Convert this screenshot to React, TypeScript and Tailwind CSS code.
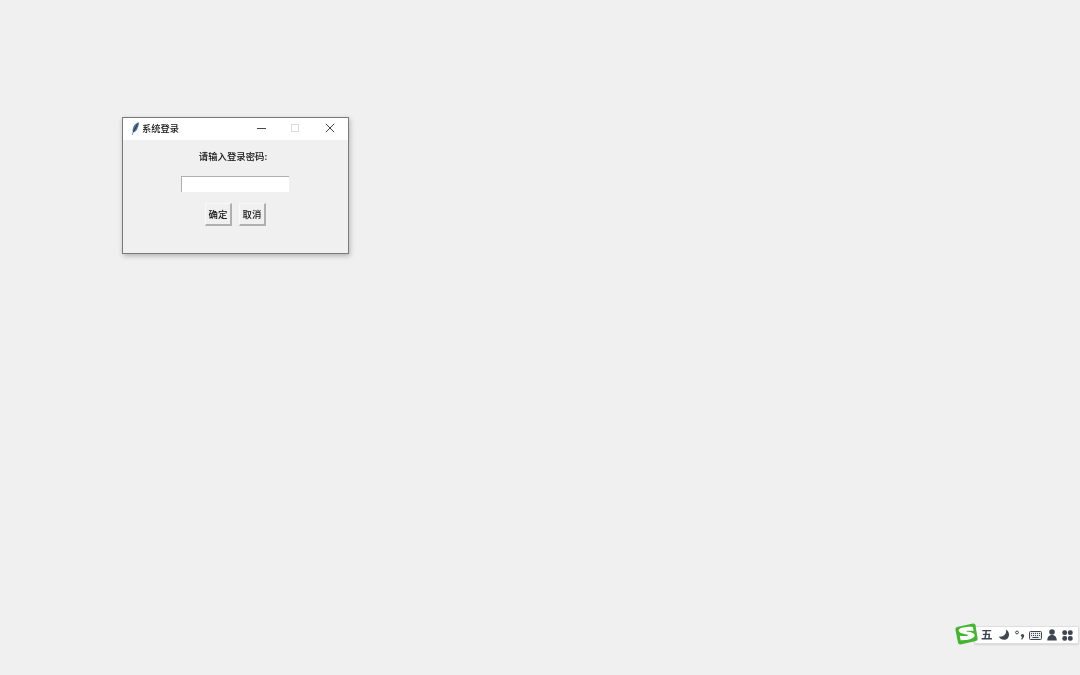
import React from "react";

const cjk = { fontFamily: '"Noto Sans CJK SC", sans-serif' };

function Feather() {
  return (
    <svg width="9" height="13" viewBox="0 0 9 13">
      <path d="M8 0.2 C5.2 0.6 2.8 2.8 1.9 6.3 C1.5 8.1 1.6 9.3 1.9 10 L0.8 12.7 L1.5 13 L2.6 10.3 C5.4 9.6 7.4 6.5 8 0.2 Z" fill="#4f749e" />
      <path d="M6.8 1.6 L2.4 9.9" stroke="#1d2f45" strokeWidth="0.9" fill="none" />
    </svg>
  );
}

function Btn({ label }: { label: string }) {
  return (
    <div className="w-[27px] h-[23px] flex items-center justify-center bg-[#f0f0f0] border-t border-l border-t-[#f8f8f8] border-l-[#f8f8f8] border-r-2 border-b-2 border-r-[#b0b0b0] border-b-[#b0b0b0]">
      <span className="mt-[1px] text-[9.4px] font-medium text-[#111] leading-none blur-[0.3px]">{label}</span>
    </div>
  );
}

const ic = "#3f4652";

export default function App() {
  return (
    <div className="relative w-[1080px] h-[675px] bg-[#f0f0f0] overflow-hidden" style={cjk}>
      {/* Window */}
      <div className="absolute left-[122px] top-[117px] w-[227px] h-[137px] flex flex-col border border-[#7a7a7a] bg-[#f0f0f0] shadow-[1px_2px_5px_rgba(0,0,0,0.25)]">
        <div className="h-[22px] bg-white flex items-center shrink-0 pb-[1px]">
          <div className="ml-[8px] w-[9px] flex items-center blur-[0.2px]"><Feather /></div>
          <span className="ml-[2px] mt-[1px] text-[9.25px] font-medium text-[#111] leading-none blur-[0.3px]">系统登录</span>
          <div className="ml-auto flex items-center mb-[2px]">
            <svg width="9" height="10" viewBox="0 0 9 10" className="mr-[25px]"><path d="M0 5.5H9" stroke="#444" strokeWidth="1" /></svg>
            <svg width="8" height="8" viewBox="0 0 8 8" className="mr-[26px]"><rect x="0.5" y="0.5" width="7" height="7" fill="none" stroke="#dcdcdc" /></svg>
            <svg width="10" height="10" viewBox="0 0 10 10" className="mr-[13px]"><path d="M0.8 0.8L9.2 9.2M9.2 0.8L0.8 9.2" stroke="#444" strokeWidth="1" fill="none" /></svg>
          </div>
        </div>
        <div className="flex-1 flex flex-col items-center">
          <div className="mt-[11px] mr-[5px] h-[12px] flex items-center text-[9.4px] font-medium text-[#111] leading-none blur-[0.3px]">请输入登录密码:</div>
          <div className="mt-[13px] mr-[1px] w-[108px] h-[16px] bg-white border-t border-l border-t-[#b0b0b0] border-l-[#b0b0b0]" />
          <div className="mt-[11px] flex gap-[7px]">
            <Btn label="确定" />
            <Btn label="取消" />
          </div>
        </div>
      </div>

      {/* IME bar */}
      <div className="absolute left-[955px] top-[623px] w-[125px] h-[23px]">
        <div className="absolute left-[19px] top-[3px] w-[105px] h-[18px] bg-white border border-[#dedede] rounded-[2px] shadow-[0_1px_2px_rgba(0,0,0,0.12)] flex items-center">
          <span className="ml-[6px] w-[12px] text-[11.5px] font-bold leading-none text-[#3f4652] blur-[0.3px]">五</span>
          <svg width="12" height="12" viewBox="0 0 12 12" className="ml-[5px] blur-[0.3px]"><path d="M8 0.5 C8.8 5 6 8 0.8 7.6 C2.5 11 7 12 9.8 9.3 C12 6.5 11.2 2.5 8 0.5 Z" fill={ic} /></svg>
          <svg width="10" height="12" viewBox="0 0 10 12" className="ml-[5px] blur-[0.3px]">
            <circle cx="2" cy="3.5" r="1.4" fill="none" stroke={ic} strokeWidth="1" />
            <circle cx="7.5" cy="6.5" r="1.6" fill={ic} />
            <path d="M8.7 7 L6.6 10.4" stroke={ic} strokeWidth="1.3" />
          </svg>
          <svg width="13" height="9" viewBox="0 0 13 9" className="ml-[4px] blur-[0.3px]">
            <rect x="0.5" y="0.5" width="12" height="8" rx="1" fill="#e8e9eb" stroke={ic} />
            <path d="M2 2.5H11M2 4.5H11" stroke={ic} strokeWidth="1" strokeDasharray="1 1" />
            <path d="M3.5 6.5H9.5" stroke={ic} />
          </svg>
          <svg width="10" height="12" viewBox="0 0 10 12" className="ml-[5px] blur-[0.3px]">
            <circle cx="5" cy="3" r="2.8" fill={ic} />
            <path d="M0.3 11.5 C0.3 7.5 2.5 6 5 6 C7.5 6 9.7 7.5 9.7 11.5 Z" fill={ic} />
          </svg>
          <svg width="11" height="11" viewBox="0 0 11 11" className="ml-[5px] blur-[0.3px]">
            <rect x="0.3" y="0.3" width="4.8" height="4.8" rx="2" fill={ic} />
            <rect x="5.9" y="0.3" width="4.8" height="4.8" rx="2" fill={ic} />
            <rect x="0.3" y="5.9" width="4.8" height="4.8" rx="2" fill={ic} />
            <rect x="5.9" y="5.9" width="4.8" height="4.8" rx="2" fill={ic} />
          </svg>
        </div>
        <svg width="23" height="22" viewBox="0 0 23 22" className="absolute left-0 top-0">
          <path d="M2 4 L18 0.6 Q20 0.3 20.5 2.3 L22.6 15.5 Q22.9 17.5 20.9 18 L5.5 21.4 Q3.5 21.7 3 19.7 L0.4 6.5 Q0.2 4.6 2 4 Z" fill="#43b52f" />
          <path d="M18 4 C13 3.4 5.5 4.4 3.9 6.6 C2.6 9.4 7 10.8 10.6 11.2 C12.8 11.4 13.8 11.8 13 12.4 C11.6 13.2 7.5 13.2 4.8 12.8 L5.6 17.2 C11 17.6 17.6 16.4 19.4 13.6 C20.8 10.6 16.8 9.2 13.4 8.8 C11.8 8.6 11 8.4 11.6 8 C12.8 7.6 15 7.6 18.6 8 Z" fill="#fff" />
        </svg>
      </div>
    </div>
  );
}
